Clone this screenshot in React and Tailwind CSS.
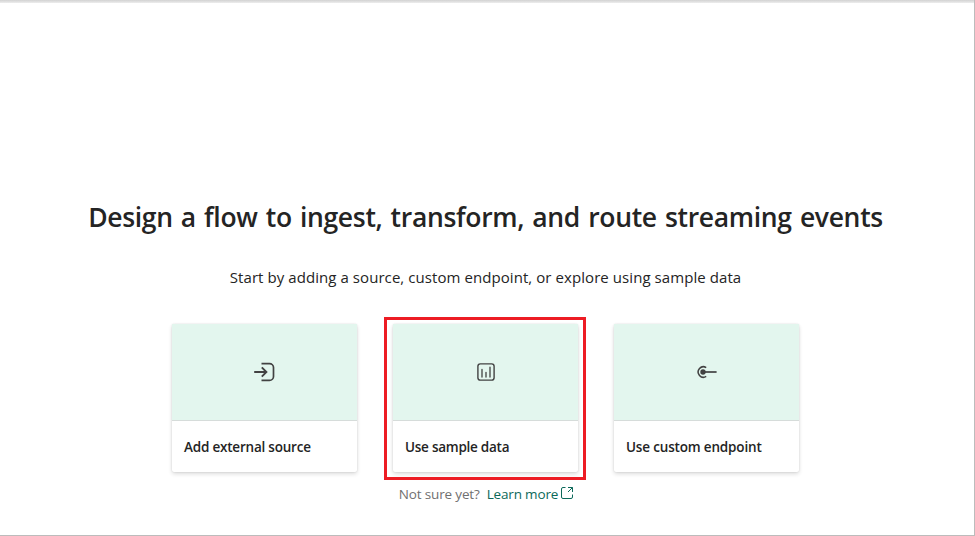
const stroke = {
  fill: 'none',
  stroke: '#424242',
  strokeLinecap: 'butt',
};

function SourceIcon() {
  return (
    <svg width="24" height="24" viewBox="0 0 24 24" {...stroke} strokeWidth="1.7">
      <path d="M8.5 3.6h8a4 4 0 0 1 4 4v8.8a4 4 0 0 1-4 4h-8" />
      <path d="M1.2 12h12.4M8.8 7.4l4.6 4.6-4.6 4.6" strokeWidth="1.9" />
    </svg>
  );
}

function ChartIcon() {
  return (
    <svg width="24" height="24" viewBox="0 0 24 24" {...stroke} strokeWidth="1.4">
      <rect x="3.9" y="3.9" width="16.2" height="16.2" rx="2.4" />
      <path d="M8 9.5V17M12 12.3V17M16 7.2V17" strokeLinecap="round" strokeWidth="1.3" />
    </svg>
  );
}

function EndpointIcon() {
  return (
    <svg width="24" height="24" viewBox="0 0 24 24" {...stroke} strokeWidth="1.5">
      <path d="M11.2 7.6a5.2 5.2 0 1 0 0 8.8" />
      <circle cx="8" cy="12" r="2.7" fill="#424242" stroke="none" />
      <path d="M8 12h13.6" strokeWidth="1.7" />
    </svg>
  );
}

function OpenIcon() {
  return (
    <svg width="14" height="14" viewBox="0 0 14 14" fill="none" stroke="#0c695a" strokeWidth="1">
      <path d="M5.5 .5H3A1.5 1.5 0 0 0 1.5 2v8A1.5 1.5 0 0 0 3 11.5h8a1.5 1.5 0 0 0 1.5-1.5V7.5M8 .5h4.5V5M12.5 .5L8 5" />
    </svg>
  );
}

function Card({ icon, label, spacing, highlighted }) {
  return (
    <div className="relative h-[148px] w-[185px] rounded-xs bg-white shadow-[0_2px_4px_rgba(0,0,0,0.14),0_0_2px_rgba(0,0,0,0.12)]">
      <div className="flex h-[97px] items-center justify-center border-b border-[#d6dcda] bg-[#e3f6ee]">
        {icon}
      </div>
      <div className={`flex h-[51px] items-center pt-0.5 pl-3 text-[13.5px] font-semibold whitespace-nowrap ${spacing}`}>
        {label}
      </div>
      {highlighted && (
        <div className="pointer-events-none absolute -top-[7px] -left-[9px] h-[163px] w-[202px] border-3 border-[#ed1c24]" />
      )}
    </div>
  );
}

export default function App() {
  return (
    <main className="flex h-[536px] w-[975px] flex-col overflow-hidden border-r border-b border-[#bcbcbc] bg-white font-['Open_Sans','Noto_Sans',sans-serif] text-[#242424]">
      <div className="h-[3px] shrink-0 bg-linear-to-b from-[#d2d2d2] to-[#ededed]" />
      <div className="flex flex-col items-center pt-[194px] pr-[3px]">
        <h1 className="h-10 text-[26.5px] leading-10 font-semibold tracking-[-0.32px] whitespace-nowrap [word-spacing:1.6px]">
          Design a flow to ingest, transform, and route streaming events
        </h1>
        <p className="mt-[28px] h-6 text-[15px] leading-6 tracking-[0.07px] whitespace-nowrap">
          Start by adding a source, custom endpoint, or explore using sample data
        </p>
        <div className="mt-[35px] flex gap-9">
          <Card icon={<SourceIcon />} label="Add external source" spacing="tracking-[-0.21px]" />
          <Card icon={<ChartIcon />} label="Use sample data" spacing="tracking-[-0.25px]" highlighted />
          <Card icon={<EndpointIcon />} label="Use custom endpoint" spacing="tracking-[-0.17px]" />
        </div>
        <div className="mt-3 flex h-5 items-center pl-0.5 text-[13.5px] leading-5 tracking-[-0.16px] whitespace-nowrap">
          <span className="text-[#707070]">Not sure yet?</span>
          <a className="ml-[7px] flex items-center gap-0.5 text-[#0c695a]">
            Learn more
            <OpenIcon />
          </a>
        </div>
      </div>
    </main>
  );
}
